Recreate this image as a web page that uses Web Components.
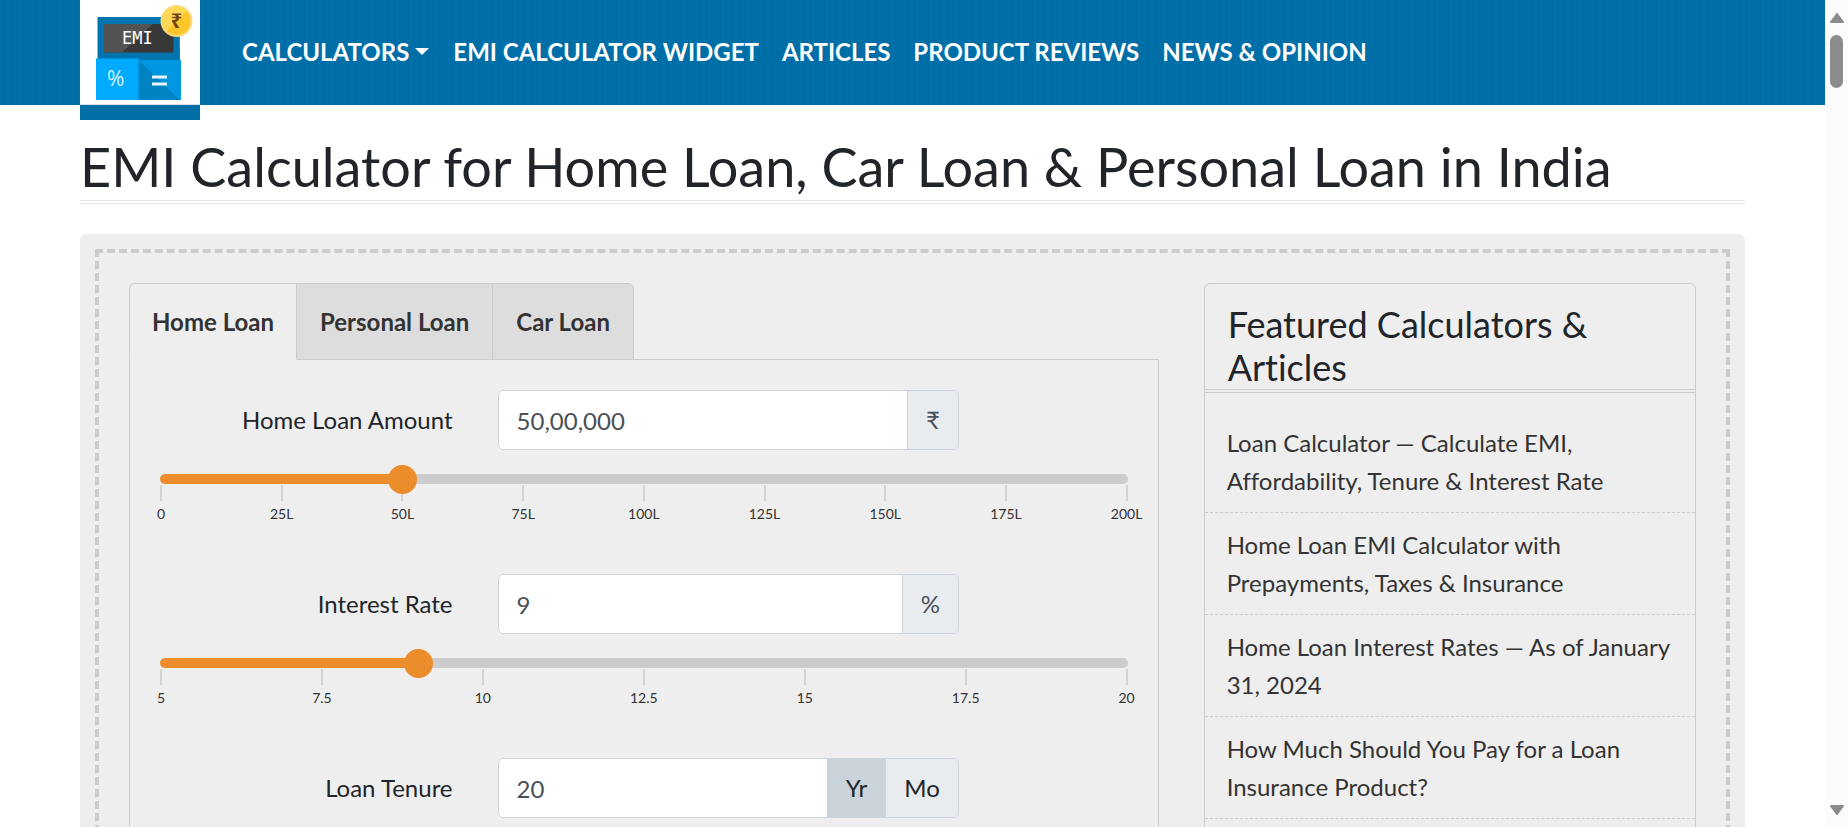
<!DOCTYPE html>
<html lang="en">
<head>
<meta charset="utf-8">
<meta name="viewport" content="width=device-width, initial-scale=1">
<title>EMI Calculator</title>
<style>
  html, body { margin: 0; height: 100%; }
  body {
    font-family: Lato, "Noto Sans", sans-serif;
    font-size: 24px;
    font-variant-ligatures: none;
    color: #212529;
    background: #fff;
    overflow: hidden;
  }
</style>
</head>
<body>
<page-shell>
  <site-header slot="header">
    <emi-logo slot="brand"></emi-logo>
    <nav-link href="#calculators" menu>CALCULATORS</nav-link>
    <nav-link href="#widget">EMI CALCULATOR WIDGET</nav-link>
    <nav-link href="#articles">ARTICLES</nav-link>
    <nav-link href="#reviews">PRODUCT REVIEWS</nav-link>
    <nav-link href="#news">NEWS &amp; OPINION</nav-link>
  </site-header>
  <page-title>EMI Calculator for Home Loan, Car Loan &amp; Personal Loan in India</page-title>
  <calc-panel>
    <loan-tabs slot="main">
      <loan-field label="Home Loan Amount" value="50,00,000" unit="₹" min="0" max="200" at="50" ticks="0,25L,50L,75L,100L,125L,150L,175L,200L"></loan-field>
      <loan-field label="Interest Rate" value="9" unit="%" min="5" max="20" at="9" ticks="5,7.5,10,12.5,15,17.5,20"></loan-field>
      <loan-field label="Loan Tenure" value="20" choices="Yr,Mo" min="0" max="30" at="20"></loan-field>
    </loan-tabs>
    <feature-card slot="side">
      <span slot="title">Featured Calculators &amp; Articles</span>
      <feature-item href="#loan">Loan Calculator — Calculate EMI, Affordability, Tenure &amp; Interest Rate</feature-item>
      <feature-item href="#home">Home Loan EMI Calculator with Prepayments, Taxes &amp; Insurance</feature-item>
      <feature-item href="#rates">Home Loan Interest Rates — As of January 31, 2024</feature-item>
      <feature-item href="#insurance">How Much Should You Pay for a Loan Insurance Product?</feature-item>
    </feature-card>
  </calc-panel>
</page-shell>

<script>
const define = (name, html, setup) => {
  const template = document.createElement('template');
  template.innerHTML = html;
  customElements.define(name, class extends HTMLElement {
    constructor() {
      super();
      this.attachShadow({ mode: 'open' }).append(template.content.cloneNode(true));
    }
    connectedCallback() {
      if (setup && !this.ready) { this.ready = true; setup(this, this.shadowRoot); }
    }
  });
};

define('page-shell', `
  <style>
    :host { display: grid; grid-template-columns: minmax(0, 1fr) 23px; height: 100vh; }
    .view { overflow: hidden; }
    main { max-width: 1665px; margin: 0 auto; }
    @media (max-width: 1700px) { main { margin: 0 24px; } }
  </style>
  <div class="view">
    <slot name="header"></slot>
    <main><slot></slot></main>
  </div>
  <scroll-rail></scroll-rail>`);

define('scroll-rail', `
  <style>
    :host { display: flex; flex-direction: column; align-items: center; gap: 12px;
      padding: 13px 0 12px; background: #fcfcfc; }
    svg { display: block; fill: #8b8b8b; stroke: #8b8b8b; stroke-width: 2; stroke-linejoin: round; }
    .thumb { width: 13px; height: 53px; border-radius: 7px; background: #8b8b8b; }
    .down { margin-top: auto; }
  </style>
  <svg width="14" height="10" viewBox="0 0 14 10"><path d="M7 1 13 9H1z"/></svg>
  <div class="thumb"></div>
  <svg class="down" width="14" height="10" viewBox="0 0 14 10"><path d="M7 9 1 1h12z"/></svg>`);

define('site-header', `
  <style>
    :host { display: block; height: 105px;
      background: repeating-linear-gradient(90deg, #006fa8 0 4px, #006da5 4px 6px, #0070aa 6px 9px, #006ea6 9px 13px); }
    .bar { display: flex; align-items: flex-start; gap: 30px; max-width: 1665px; height: 105px; margin: 0 auto; }
    nav { display: flex; align-items: center; height: 103px; white-space: nowrap; }
    @media (max-width: 1700px) { .bar { margin: 0 24px; } }
  </style>
  <div class="bar"><slot name="brand"></slot><nav><slot></slot></nav></div>`);

define('nav-link', `
  <style>
    :host { display: block; padding: 0 12px; }
    :host(:not([menu])) { padding: 0 11px 0 12px; }
    a { display: flex; align-items: center; gap: 6px; color: #fff; font-weight: 700;
      line-height: 36px; text-decoration: none; }
    svg { display: none; fill: #fff; }
    :host([menu]) svg { display: block; }
  </style>
  <a><slot></slot><svg width="14" height="7" viewBox="0 0 14 7"><path d="M0 0h14L7 7z"/></svg></a>`,
  (el, root) => { root.querySelector('a').href = el.getAttribute('href'); });

define('emi-logo', `
  <style>
    :host { display: block; width: 120px; }
    a { display: block; height: 105px; background: #fff; border-bottom: 15px solid #006fa8; }
    svg { display: block; }
  </style>
  <a href="#home" aria-label="Home">
    <svg width="120" height="105" viewBox="0 0 120 105">
      <path d="M17.500 17h82l.5 43H17.500z" fill="#0074ae"/>
      <path d="M24 24h69.500v28.500H24z" fill="#383838"/>
      <path d="M24 24h49L42 52.500H24z" fill="#535353"/>
      <path d="M16 58.500h43V100H16z" fill="#00aaff"/>
      <path d="M58.500 60H101v40H58.500z" fill="#0096e0"/>
      <path d="M58.500 60l41 40h-41z" fill="#0083c2"/>
      <path d="M72 75.500h15v3H72zM72 82.500h15v3H72z" fill="#e6f4fb"/>
      <text x="42" y="44" font-family="DejaVu Sans Mono, monospace" font-size="17" fill="#fff">EMI</text>
      <text x="27" y="86" font-family="Open Sans, sans-serif" font-size="21" fill="#d5f0ff">%</text>
      <circle cx="96.500" cy="21" r="16" fill="#f7dc7c"/>
      <circle cx="96.500" cy="21" r="14" fill="#fcc62b"/>
      <path d="M86.500 31A14 14 0 0 1 106.500 11z" fill="#ffd956"/>
      <text x="96.500" y="28" text-anchor="middle" font-family="Noto Sans, sans-serif" font-weight="700" font-size="20" fill="#6f4518">₹</text>
      <path d="M0 104h120v1H0z" fill="#d5dfe5"/>
    </svg>
  </a>`);

define('page-title', `
  <style>
    :host { display: block; margin: 29px 0 30px; }
    h1 { margin: 0; font-size: 54px; font-weight: 400; line-height: 66px; border-bottom: 4px double #e5e5e5; }
  </style>
  <h1><slot></slot></h1>`);

define('calc-panel', `
  <style>
    :host { display: block; padding: 15px; background: #eee; border-radius: 6px; }
    .frame { display: grid; grid-template-columns: repeat(3, minmax(0, 1fr)); gap: 45px;
      padding: 30px; border: 4px dashed #ccc; }
    .wide { grid-column: span 2; }
    .side { display: grid; }
  </style>
  <div class="frame">
    <div class="wide"><slot name="main"></slot></div>
    <div class="side"><slot name="side"></slot></div>
  </div>`);

define('loan-tabs', `
  <style>
    :host { display: block; }
    .tabs { display: flex; margin-bottom: -1px; position: relative; }
    button { height: 77px; margin: 0; padding: 0 23px; border: 1px solid #ccc; border-left-width: 0;
      background: #ddd; color: #333; font: inherit; font-weight: 700; }
    button:first-child { padding: 0 22px; border-left-width: 1px; border-top-left-radius: 6px; }
    button:last-child { border-top-right-radius: 6px; }
    button[aria-selected=true] { background: #eee; border-bottom-color: #eee; }
    .pane { display: grid; gap: 42px; padding: 30px; border: 1px solid #ccc; }
  </style>
  <div class="tabs" role="tablist">
    <button role="tab" aria-selected="true">Home Loan</button>
    <button role="tab" aria-selected="false">Personal Loan</button>
    <button role="tab" aria-selected="false">Car Loan</button>
  </div>
  <div class="pane" role="tabpanel"><slot></slot></div>`,
  (el, root) => {
    const tabs = [...root.querySelectorAll('button')];
    tabs.forEach(tab => tab.addEventListener('click', () =>
      tabs.forEach(other => other.setAttribute('aria-selected', other === tab))));
  });

define('loan-field', `
  <style>
    :host { display: block; }
    .row { display: grid; grid-template-columns: repeat(12, minmax(0, 1fr)); column-gap: 45px;
      align-items: center; margin-bottom: 24px; }
    .name { grid-column: span 4; padding-bottom: 2px; text-align: right; white-space: nowrap; }
    .group { grid-column: span 6; display: flex; height: 60px; box-sizing: border-box;
      border: 1px solid #ced4da; border-radius: 6px; overflow: hidden; background: #fff; }
    .text { flex: 1; min-width: 0; padding: 0 18px; border: 0; outline: 0; background: #fff;
      color: #495057; font: inherit; }
    .unit, .choice { display: flex; align-items: center; padding: 0 18px 2px; border-left: 1px solid #ced4da;
      background: #e9ecef; }
    .unit { color: #495057; }
    .choice:has(:checked) { background: #cbd3da; }
    .choice input { appearance: none; width: 0; height: 0; margin: 0; }
    .slider { display: grid; grid-template-rows: 10px; align-items: center; position: relative; z-index: 1; }
    .track, .range { grid-area: 1 / 1; }
    .track { height: 10px; border-radius: 5px;
      background: linear-gradient(90deg, #ed8c2b var(--fill), #ccc var(--fill)); }
    .range { appearance: none; height: 29px; margin: 0 -14px; background: none; outline: 0; }
    .range::-webkit-slider-thumb { appearance: none; width: 29px; height: 29px; border-radius: 50%; background: #ed8c2b; }
    .scale { display: flex; justify-content: space-between; margin: 1px 0 0; padding: 0; height: 47px;
      list-style: none; font-size: 14px; line-height: 17px; color: #333; }
    .scale li { display: flex; flex-direction: column; align-items: center; gap: 4px; width: 2px; white-space: nowrap; }
    .scale li::before { content: ""; flex: none; width: 2px; height: 16px; background: #d3d3d3; }
  </style>
  <div class="row">
    <label class="name" for="value"></label>
    <div class="group"><input class="text" id="value" type="text"></div>
  </div>
  <div class="slider">
    <div class="track"></div>
    <input class="range" type="range" step="any">
  </div>
  <ul class="scale"></ul>`,
  (el, root) => {
    const get = name => el.getAttribute(name);
    const group = root.querySelector('.group');
    const range = root.querySelector('.range');
    const track = root.querySelector('.track');
    root.querySelector('.name').textContent = get('label');
    root.querySelector('.text').value = get('value');
    if (get('unit')) {
      const unit = document.createElement('span');
      unit.className = 'unit';
      unit.textContent = get('unit');
      group.append(unit);
    }
    (get('choices') || '').split(',').filter(Boolean).forEach((name, i) => {
      const choice = document.createElement('label');
      choice.className = 'choice';
      const radio = document.createElement('input');
      radio.type = 'radio';
      radio.name = 'period';
      radio.checked = i === 0;
      choice.append(radio, name);
      group.append(choice);
    });
    range.min = get('min');
    range.max = get('max');
    range.value = get('at');
    range.setAttribute('aria-label', get('label'));
    const paint = () => track.style.setProperty('--fill',
      (range.value - range.min) / (range.max - range.min) * 100 + '%');
    range.addEventListener('input', paint);
    paint();
    (get('ticks') || '').split(',').filter(Boolean).forEach(tick => {
      const item = document.createElement('li');
      item.textContent = tick;
      root.querySelector('.scale').append(item);
    });
  });

define('feature-card', `
  <style>
    :host { display: block; border: 1px solid #ccc; border-radius: 6px; }
    h2 { margin: 0 0 18px; padding: 19px 23px 0; font-size: 36px; font-weight: 400; line-height: 43px;
      border-bottom: 4px double #ccc; }
  </style>
  <h2><slot name="title"></slot></h2>
  <div role="list"><slot></slot></div>`);

define('feature-item', `
  <style>
    :host { display: block; padding: 13px 22px 12px; line-height: 38px; border-bottom: 1px dashed #ccc; }
    a { color: #333; text-decoration: none; }
  </style>
  <a><slot></slot></a>`,
  (el, root) => {
    el.setAttribute('role', 'listitem');
    root.querySelector('a').href = el.getAttribute('href');
  });
</script>
</body>
</html>
